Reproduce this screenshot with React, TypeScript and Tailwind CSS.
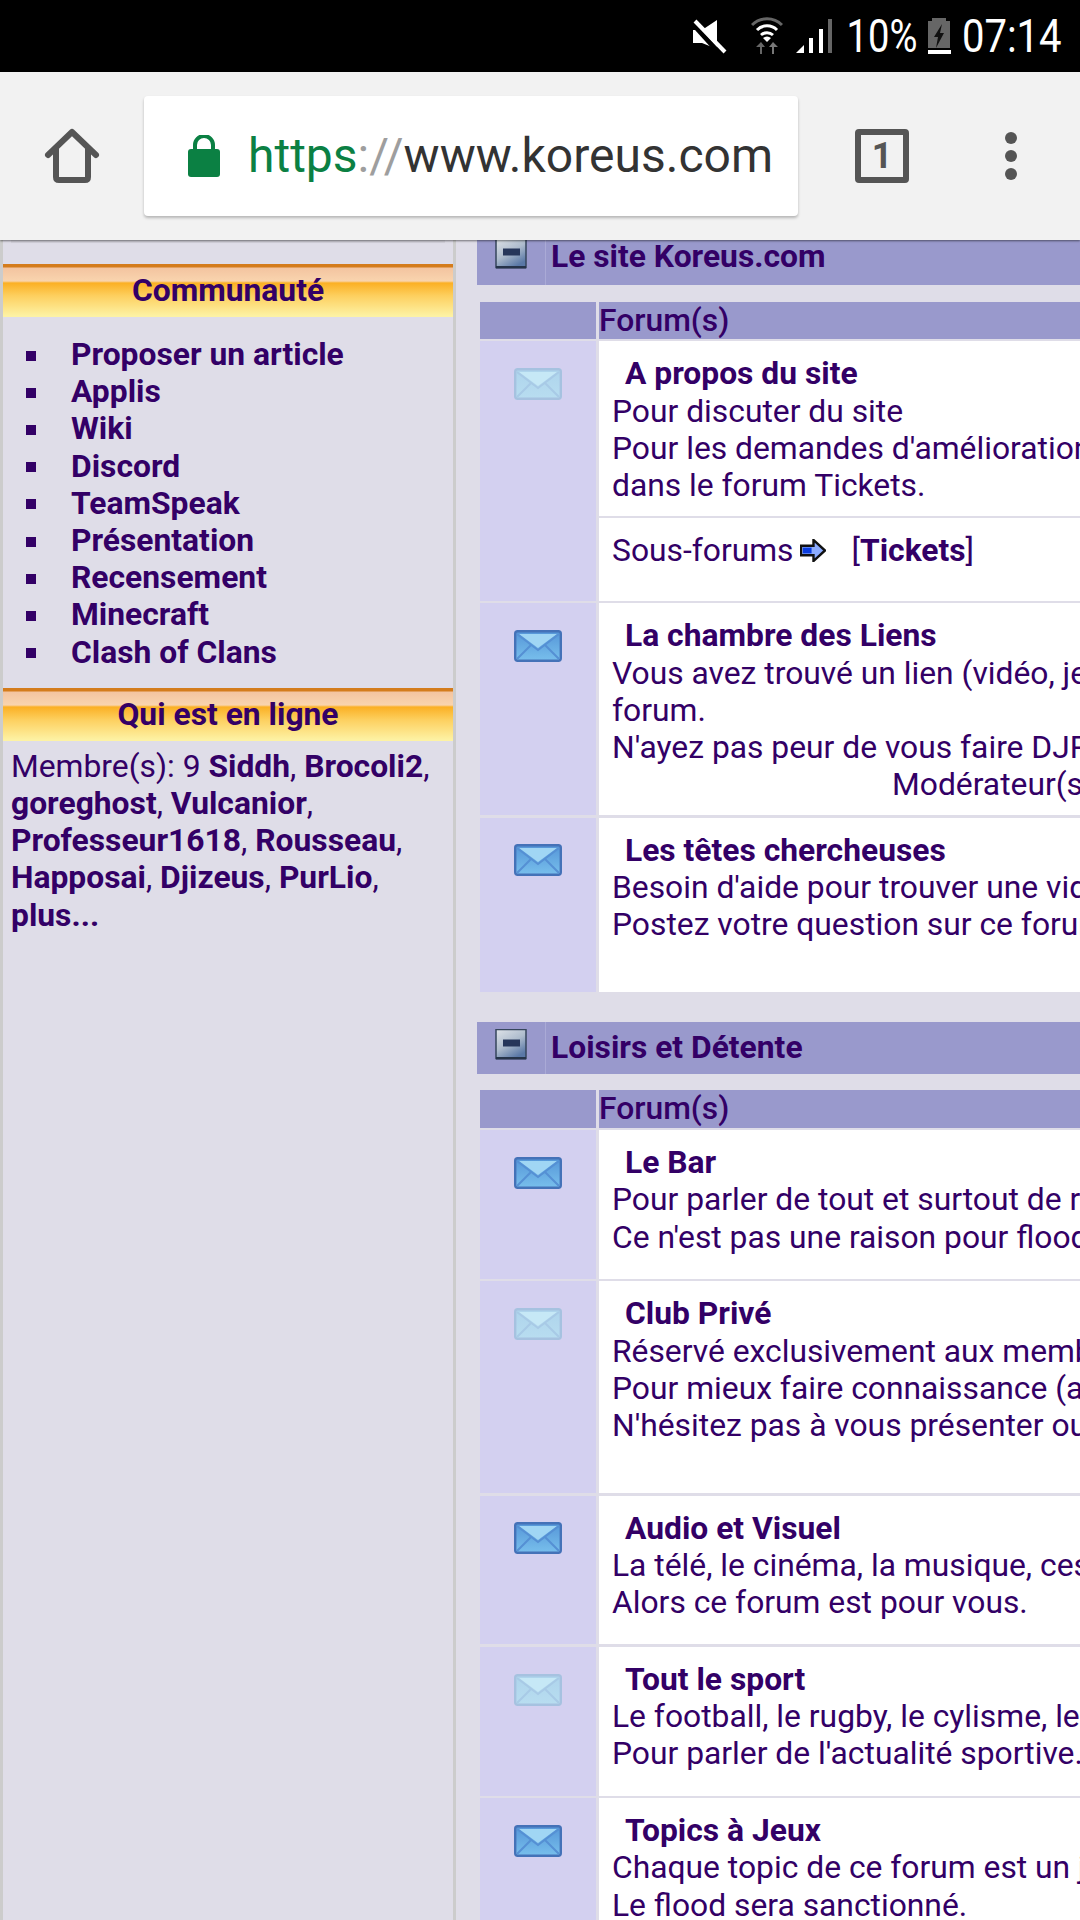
import React from 'react';

const orangeBar =
  'h-[53px] text-center font-bold leading-[52px] bg-[linear-gradient(to_bottom,#d47c1c_0,#d47c1c_3px,#f3c4a0_4px,#f9d4ae_17px,#fbb024_19px,#fdd060_32px,#fdf2a4_52px)]';

const sideLinks = [
  'Proposer un article',
  'Applis',
  'Wiki',
  'Discord',
  'TeamSpeak',
  'Présentation',
  'Recensement',
  'Minecraft',
  'Clash of Clans',
];

const Envelope = ({ read }: { read?: boolean }) => {
  const id = read ? 'envRead' : 'envNew';
  return (
    <svg width="48" height="32" viewBox="0 0 48 32">
      <defs>
        <linearGradient id={id} x1="0" y1="0" x2="0" y2="1">
          <stop offset="0" stopColor={read ? '#aed4ec' : '#5596d8'} />
          <stop offset="1" stopColor={read ? '#b8ddf0' : '#78bfec'} />
        </linearGradient>
      </defs>
      <rect
        x="1.2"
        y="1.2"
        width="45.6"
        height="29.6"
        rx="2.5"
        fill={`url(#${id})`}
        stroke={read ? '#a6c2e0' : '#4472b8'}
        strokeWidth="2.4"
      />
      <path d="M5 4 L24 18 L43 4 Z" fill={read ? '#c6e8f6' : '#a0d6f4'} />
      <path
        d="M3 4 L24 20 L45 4 M3 29 L17 15 M45 29 L31 15"
        fill="none"
        stroke={read ? '#a8cae6' : '#5590d4'}
        strokeWidth="2"
      />
    </svg>
  );
};

const Minus = () => (
  <svg width="32" height="31" viewBox="0 0 32 31">
    <defs>
      <linearGradient id="minusBody" x1="0" y1="0" x2="0.6" y2="1">
        <stop offset="0" stopColor="#dfe3e8" />
        <stop offset="0.55" stopColor="#aebccd" />
        <stop offset="1" stopColor="#5a78a6" />
      </linearGradient>
    </defs>
    <rect x="1" y="0.5" width="30" height="29" fill="url(#minusBody)" stroke="#36465c" strokeWidth="1.5" />
    <rect x="1" y="28" width="30" height="2.5" fill="#26344a" />
    <rect x="8" y="10.5" width="17" height="7" fill="#26365a" />
  </svg>
);

const Arrow = () => (
  <svg width="26" height="23" viewBox="0 0 27 24" className="block">
    <path d="M1 7 H14 V1 L26 12 L14 23 V17 H1 Z" fill="#8cacff" stroke="#111" strokeWidth="2.5" />
    <rect x="3" y="9" width="9" height="6" fill="#0a3ce0" />
  </svg>
);

const Row = ({ read, children }: { read?: boolean; children: React.ReactNode }) => (
  <div className="grid grid-cols-[116px_1fr] gap-x-[3px] min-h-[148.6px]">
    <div className="bg-[#d3d0f0] flex justify-center items-start pt-[26.7px]">
      <Envelope read={read} />
    </div>
    <div className="flex flex-col gap-[2.6px]">{children}</div>
  </div>
);

const Cell = ({ title, lines, extra }: { title: string; lines: string[]; extra?: boolean }) => (
  <div className="flex-1 bg-white pl-[13px] pt-[14px] pb-[11.7px]">
    <div className="font-bold pl-[13px]">{title}</div>
    {lines.map((l) => (
      <div key={l}>{l}</div>
    ))}
    {extra && <div>&nbsp;</div>}
  </div>
);

const CategoryHead = ({ title, className = '' }: { title: string; className?: string }) => (
  <div className={`bg-[#9999cc] flex font-bold ${className}`}>
    <div className="w-[69px] border-r border-[#aaaad6] flex justify-center pt-[7px]">
      <Minus />
    </div>
    <div className="pl-[5px] leading-[50px]">{title}</div>
  </div>
);

const ForumHead = () => (
  <div className="grid grid-cols-[116px_1fr] gap-x-[3px] h-[37.3px] mt-[16.5px] font-medium leading-[37px]">
    <div className="bg-[#9999cc]" />
    <div className="bg-[#9999cc]">Forum(s)</div>
  </div>
);

export default function App() {
  return (
    <div className="w-[1080px] h-[1920px] overflow-hidden bg-[#dfdde8] flex flex-col font-['Roboto',sans-serif] text-[#330066] text-[31.8px] leading-[37.2px] whitespace-nowrap">
      {/* status bar */}
      <div className="h-[72px] bg-black text-white flex items-center justify-end pr-[18px] shrink-0">
        <svg width="34" height="35" viewBox="0 0 34 35" className="mr-[24px]">
          <path d="M0 11 H9 L24 1 V30 L9 24 H0 Z" fill="#fff" />
          <path d="M0 5 L28 36" stroke="#000" strokeWidth="5" />
          <path d="M2 2 L32 33" stroke="#fff" strokeWidth="4" />
        </svg>
        <svg width="32" height="38" viewBox="0 0 32 38" className="mr-[13px]">
          <path d="M1 8 A21 21 0 0 1 31 8" fill="none" stroke="#666" strokeWidth="3" />
          <path d="M6 13 A14 14 0 0 1 26 13" fill="none" stroke="#fff" strokeWidth="3" />
          <path d="M10 18 A9 9 0 0 1 22 18" fill="none" stroke="#fff" strokeWidth="3" />
          <path d="M12 21 A6 6 0 0 1 20 21 L16 25 Z" fill="#fff" />
          <path d="M9 37 V30 H5 L10 25 L14 30 H11 V37 Z" fill="#666" />
          <path d="M21 37 V30 H18 L22 25 L27 30 H23 V37 Z" fill="#777" />
        </svg>
        <svg width="36" height="36" viewBox="0 0 36 36" className="mr-[16px]">
          <path d="M0 35 L8 27 V35 Z" fill="#fff" />
          <rect x="13" y="20" width="4" height="15" fill="#fff" />
          <rect x="23" y="11" width="4" height="24" fill="#fff" />
          <rect x="32" y="1" width="4" height="34" fill="#666" />
        </svg>
        <div className="w-[69px] flex justify-end mr-[10px]">
          <span className="text-[46px] leading-none shrink-0 origin-right scale-x-[0.83]">10%</span>
        </div>
        <svg width="24" height="36" viewBox="0 0 24 36" className="mr-[14px]">
          <path d="M5 0 H19 V3 H23 V30 H1 V3 H5 Z" fill="#666" />
          <rect x="1" y="32" width="23" height="4" fill="#fff" />
          <path d="M15 6 L7 19 H11 L9 30 L17 15 H13 Z" fill="#111" />
        </svg>
        <div className="w-[97px] flex justify-end">
          <span className="text-[46px] leading-none shrink-0 origin-right scale-x-[0.87]">07:14</span>
        </div>
      </div>

      {/* chrome toolbar */}
      <div className="relative z-10 h-[168px] bg-[#f2f2f2] shadow-[0_1px_2px_rgba(0,0,0,0.5)] flex items-center shrink-0 text-[#333]">
        <div className="w-[144px] flex justify-center">
          <svg width="56" height="56" viewBox="0 0 56 56">
            <path d="M4 27 L28 4 L52 27 M12 21 V49 Q12 52 15 52 H41 Q44 52 44 49 V21" fill="none" stroke="#555" strokeWidth="6" strokeLinecap="round" strokeLinejoin="round" />
          </svg>
        </div>
        <div className="w-[654px] h-[120px] bg-white rounded-[4px] shadow-[0_2px_3px_rgba(0,0,0,0.25)] flex items-center pl-[44px]">
          <svg width="32" height="42" viewBox="0 0 32 42" className="mr-[28px]">
            <path d="M7 16 V10 A9 9 0 0 1 25 10 V16" fill="none" stroke="#0b8043" strokeWidth="4" />
            <rect x="0" y="14" width="32" height="28" rx="3" fill="#0b8043" />
          </svg>
          <span className="text-[48px] leading-none font-normal">
            <span className="text-[#0b8043]">https</span>
            <span className="text-[#9e9e9e]">://</span>
            <span className="text-[#333]">www.koreus.com</span>
          </span>
        </div>
        <div className="w-[282px] flex items-center pl-[57px]">
          <div className="w-[54px] h-[54px] border-[6px] border-[#555] rounded-[4px] flex items-center justify-center text-[#555] text-[36px] font-bold leading-none">
            1
          </div>
          <div className="ml-[96px] flex flex-col gap-[6px]">
            <div className="w-[12px] h-[12px] rounded-full bg-[#555]" />
            <div className="w-[12px] h-[12px] rounded-full bg-[#555]" />
            <div className="w-[12px] h-[12px] rounded-full bg-[#555]" />
          </div>
        </div>
      </div>

      <div className="flex flex-1 min-h-0">
        {/* sidebar */}
        <aside className="w-[456px] shrink-0 border-x-[3px] border-[#cccccc]">
          <div className="h-[3px] mx-[8px] bg-[#d4d2dc]" />
          <div className={`mt-[21px] ${orangeBar}`}>Communauté</div>
          <ul className="pt-[19px] pl-[23px] pb-[17px] font-bold">
            {sideLinks.map((l) => (
              <li key={l} className="flex items-center h-[37.2px]">
                <span className="w-[10px] h-[10px] bg-[#330066] mr-[35px] mt-[2px]" />
                {l}
              </li>
            ))}
          </ul>
          <div className={orangeBar}>Qui est en ligne</div>
          <div className="pl-[8px] pt-[7px]">
            <div>
              Membre(s): 9 <b>Siddh</b>, <b>Brocoli2</b>,
            </div>
            <div>
              <b>goreghost</b>, <b>Vulcanior</b>,
            </div>
            <div>
              <b>Professeur1618</b>, <b>Rousseau</b>,
            </div>
            <div>
              <b>Happosai</b>, <b>Djizeus</b>, <b>PurLio</b>,
            </div>
            <div>
              <b>plus...</b>
            </div>
          </div>
        </aside>

        {/* forum list */}
        <main className="w-[603px] ml-[21px] overflow-hidden">
          <CategoryHead title="Le site Koreus.com" className="h-[54px] -mt-[9px]" />
          <div className="pl-[3px] flex flex-col gap-[2.6px]">
            <ForumHead />
            <Row read>
              <Cell
                title="A propos du site"
                lines={['Pour discuter du site', "Pour les demandes d'amélioration", 'dans le forum Tickets.']}
              />
              <div className="bg-white pl-[13px] pt-[13.5px] pb-[31.7px] flex items-center">
                Sous-forums
                <span className="ml-[6px] mr-[26px]">
                  <Arrow />
                </span>
                [<b>Tickets</b>]
              </div>
            </Row>
            <Row>
              <div className="flex-1 bg-white pl-[13px] pt-[14px] pb-[11.7px]">
                <div className="font-bold pl-[13px]">La chambre des Liens</div>
                <div>Vous avez trouvé un lien (vidéo, jeu</div>
                <div>forum.</div>
                <div>N'ayez pas peur de vous faire DJP</div>
                <div className="pl-[280px]">Modérateur(s)</div>
              </div>
            </Row>
            <Row>
              <Cell
                title="Les têtes chercheuses"
                lines={["Besoin d'aide pour trouver une vidéo", 'Postez votre question sur ce forum']}
                extra
              />
            </Row>
          </div>

          <CategoryHead title="Loisirs et Détente" className="h-[52px] mt-[29.6px]" />
          <div className="pl-[3px] flex flex-col gap-[2.6px]">
            <ForumHead />
            <Row>
              <Cell title="Le Bar" lines={['Pour parler de tout et surtout de rien', "Ce n'est pas une raison pour flooder"]} />
            </Row>
            <Row read>
              <Cell
                title="Club Privé"
                lines={['Réservé exclusivement aux membres', 'Pour mieux faire connaissance (a', "N'hésitez pas à vous présenter ou"]}
                extra
              />
            </Row>
            <Row>
              <Cell title="Audio et Visuel" lines={['La télé, le cinéma, la musique, ces', 'Alors ce forum est pour vous.']} />
            </Row>
            <Row read>
              <Cell title="Tout le sport" lines={['Le football, le rugby, le cylisme, le', "Pour parler de l'actualité sportive."]} />
            </Row>
            <Row>
              <Cell title="Topics à Jeux" lines={['Chaque topic de ce forum est un jeu', 'Le flood sera sanctionné.']} />
            </Row>
          </div>
        </main>
      </div>
    </div>
  );
}
